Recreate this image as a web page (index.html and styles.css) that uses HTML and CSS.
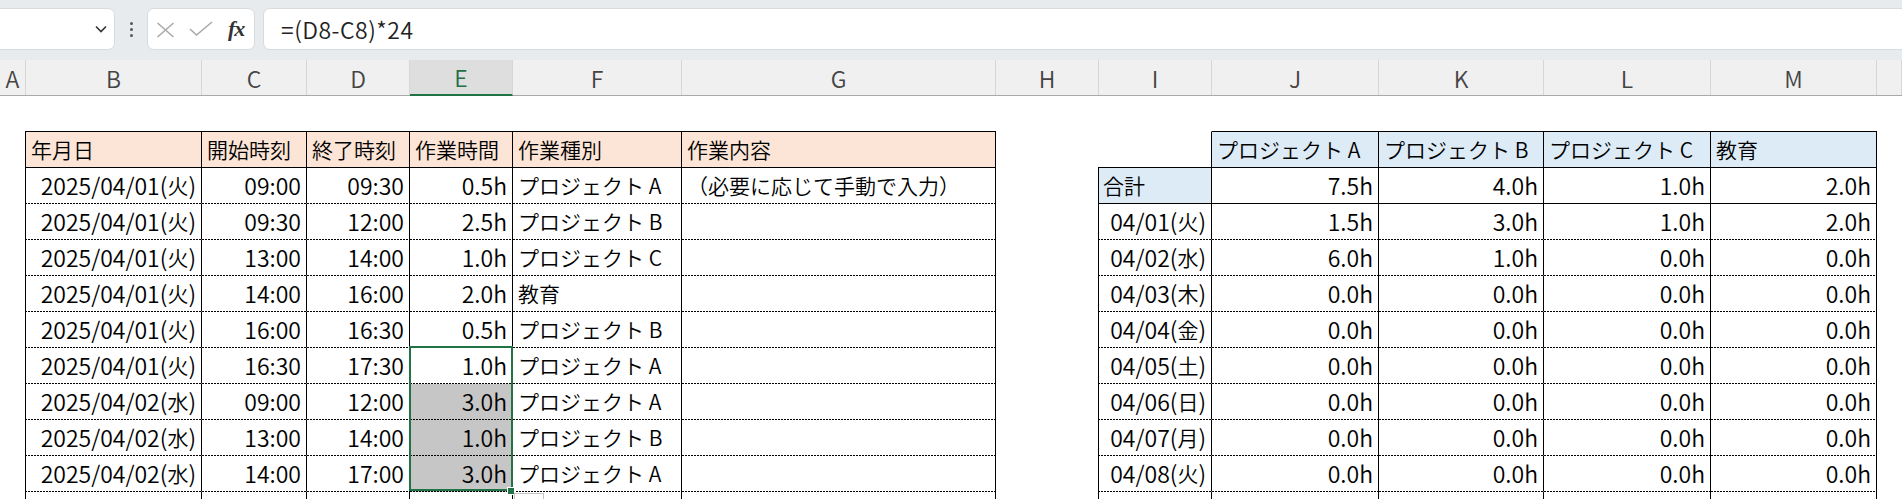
FILE: index.html
```html
<!DOCTYPE html>
<html lang="ja">
<head>
<meta charset="utf-8">
<title>作業記録</title>
<link rel="stylesheet" href="styles.css">
</head>
<body>
<div class="app">
  <div class="fbar">
    <div class="namebox">
      <svg class="chev" width="12" height="8" viewBox="0 0 12 8"><polyline points="1,1.5 6,6.5 11,1.5" fill="none" stroke="#333" stroke-width="1.6"/></svg>
    </div>
    <div class="vdots"><i></i><i></i><i></i></div>
    <div class="fxbox">
      <svg class="ico-x" width="19" height="16" viewBox="0 0 19 16"><path d="M1.5 1 L17.5 15 M17.5 1 L1.5 15" stroke="#a8a8a8" stroke-width="1.5" fill="none"/></svg>
      <svg class="ico-ok" width="24" height="15" viewBox="0 0 24 15"><polyline points="1,8 7.5,14 23,1" stroke="#a8a8a8" stroke-width="1.5" fill="none"/></svg>
      <span class="fx">fx</span>
    </div>
    <div class="formula">=(D8-C8)*24</div>
  </div>

  <div class="colhdr">
    <div class="ch">A</div>
    <div class="ch">B</div>
    <div class="ch">C</div>
    <div class="ch">D</div>
    <div class="ch on">E</div>
    <div class="ch">F</div>
    <div class="ch">G</div>
    <div class="ch">H</div>
    <div class="ch">I</div>
    <div class="ch">J</div>
    <div class="ch">K</div>
    <div class="ch">L</div>
    <div class="ch">M</div>
    <div class="ch"></div>
  </div>

  <div class="sheet">
    <div class="lt">
      <div class="c h first">年月日</div><div class="c h">開始時刻</div><div class="c h">終了時刻</div><div class="c h">作業時間</div><div class="c h">作業種別</div><div class="c h">作業内容</div>

      <div class="c first r n">2025/04/01(<span class="k">火</span>)</div><div class="c r n">09:00</div><div class="c r n">09:30</div><div class="c r n">0.5h</div><div class="c">プロジェクト A</div><div class="c">（必要に応じて手動で入力）</div>
      <div class="c first r n">2025/04/01(<span class="k">火</span>)</div><div class="c r n">09:30</div><div class="c r n">12:00</div><div class="c r n">2.5h</div><div class="c">プロジェクト B</div><div class="c"></div>
      <div class="c first r n">2025/04/01(<span class="k">火</span>)</div><div class="c r n">13:00</div><div class="c r n">14:00</div><div class="c r n">1.0h</div><div class="c">プロジェクト C</div><div class="c"></div>
      <div class="c first r n">2025/04/01(<span class="k">火</span>)</div><div class="c r n">14:00</div><div class="c r n">16:00</div><div class="c r n">2.0h</div><div class="c">教育</div><div class="c"></div>
      <div class="c first r n">2025/04/01(<span class="k">火</span>)</div><div class="c r n">16:00</div><div class="c r n">16:30</div><div class="c r n">0.5h</div><div class="c">プロジェクト B</div><div class="c"></div>
      <div class="c first r n">2025/04/01(<span class="k">火</span>)</div><div class="c r n">16:30</div><div class="c r n">17:30</div><div class="c r n">1.0h</div><div class="c">プロジェクト A</div><div class="c"></div>
      <div class="c first r n">2025/04/02(<span class="k">水</span>)</div><div class="c r n">09:00</div><div class="c r n">12:00</div><div class="c r n sel">3.0h</div><div class="c">プロジェクト A</div><div class="c"></div>
      <div class="c first r n">2025/04/02(<span class="k">水</span>)</div><div class="c r n">13:00</div><div class="c r n">14:00</div><div class="c r n sel">1.0h</div><div class="c">プロジェクト B</div><div class="c"></div>
      <div class="c first r n">2025/04/02(<span class="k">水</span>)</div><div class="c r n">14:00</div><div class="c r n">17:00</div><div class="c r n sel">3.0h</div><div class="c">プロジェクト A</div><div class="c"></div>
      <div class="c first r n"></div><div class="c r n"></div><div class="c r n"></div><div class="c r n"></div><div class="c"></div><div class="c"></div>
    </div>

    <div class="rt">
      <div class="c corner"></div><div class="c hb">プロジェクト A</div><div class="c hb">プロジェクト B</div><div class="c hb">プロジェクト C</div><div class="c hb">教育</div>

      <div class="c first tot">合計</div><div class="c r n solid">7.5h</div><div class="c r n solid">4.0h</div><div class="c r n solid">1.0h</div><div class="c r n solid">2.0h</div>
      <div class="c first r n">04/01(<span class="k">火</span>)</div><div class="c r n">1.5h</div><div class="c r n">3.0h</div><div class="c r n">1.0h</div><div class="c r n">2.0h</div>
      <div class="c first r n">04/02(<span class="k">水</span>)</div><div class="c r n">6.0h</div><div class="c r n">1.0h</div><div class="c r n">0.0h</div><div class="c r n">0.0h</div>
      <div class="c first r n">04/03(<span class="k">木</span>)</div><div class="c r n">0.0h</div><div class="c r n">0.0h</div><div class="c r n">0.0h</div><div class="c r n">0.0h</div>
      <div class="c first r n">04/04(<span class="k">金</span>)</div><div class="c r n">0.0h</div><div class="c r n">0.0h</div><div class="c r n">0.0h</div><div class="c r n">0.0h</div>
      <div class="c first r n">04/05(<span class="k">土</span>)</div><div class="c r n">0.0h</div><div class="c r n">0.0h</div><div class="c r n">0.0h</div><div class="c r n">0.0h</div>
      <div class="c first r n">04/06(<span class="k">日</span>)</div><div class="c r n">0.0h</div><div class="c r n">0.0h</div><div class="c r n">0.0h</div><div class="c r n">0.0h</div>
      <div class="c first r n">04/07(<span class="k">月</span>)</div><div class="c r n">0.0h</div><div class="c r n">0.0h</div><div class="c r n">0.0h</div><div class="c r n">0.0h</div>
      <div class="c first r n">04/08(<span class="k">火</span>)</div><div class="c r n">0.0h</div><div class="c r n">0.0h</div><div class="c r n">0.0h</div><div class="c r n">0.0h</div>
      <div class="c first r n">04/09(<span class="k">水</span>)</div><div class="c r n">0.0h</div><div class="c r n">0.0h</div><div class="c r n">0.0h</div><div class="c r n">0.0h</div>
    </div>

    <div class="selbox"></div>
    <div class="handle"></div>
    <div class="qa"></div>
  </div>
</div>
</body>
</html>
```

FILE: styles.css
```css
* { box-sizing: border-box; margin: 0; padding: 0; }

html, body {
  width: 1902px;
  height: 499px;
  overflow: hidden;
  background: #fff;
}

body {
  font-family: "Noto Sans CJK JP", "Noto Sans", sans-serif;
  font-weight: 350;
  color: #000;
}

.app {
  display: flex;
  flex-direction: column;
  height: 499px;
  overflow: hidden;
}

/* ---------- formula bar ---------- */
.fbar {
  height: 60px;
  flex: none;
  background: #e8ebee;
  display: flex;
  align-items: flex-start;
  padding-top: 8px;
}

.namebox {
  width: 126px;
  height: 42px;
  margin-left: -11px;
  background: #fff;
  border: 1px solid #d9dcdf;
  border-radius: 7px;
  display: flex;
  align-items: center;
  justify-content: flex-end;
  padding-right: 7px;
}

.vdots {
  width: 32px;
  height: 42px;
  display: flex;
  flex-direction: column;
  align-items: center;
  justify-content: center;
  gap: 3px;
}

.vdots i {
  display: block;
  width: 3px;
  height: 3px;
  border-radius: 50%;
  background: #555;
}

.fxbox {
  width: 108px;
  height: 42px;
  background: #fff;
  border: 1px solid #d9dcdf;
  border-radius: 7px;
  display: flex;
  align-items: center;
  padding-left: 8px;
}

.ico-x { margin-top: 1px; }
.ico-ok { margin-left: 14px; margin-top: -1px; }

.fx {
  margin-left: 15px;
  font-family: "Liberation Serif", serif;
  font-style: italic;
  font-weight: bold;
  font-size: 22px;
  color: #333;
  letter-spacing: -1px;
}

.formula {
  flex: 1;
  height: 42px;
  margin-left: 8px;
  margin-right: -10px;
  background: #fff;
  border: 1px solid #d9dcdf;
  border-radius: 7px;
  display: flex;
  align-items: center;
  padding-left: 17px;
  font-size: 23px;
  letter-spacing: 0.5px;
  color: #222;
}

/* ---------- column header ---------- */
.colhdr {
  flex: none;
  height: 36px;
  display: grid;
  grid-template-columns: 26px 176px 105px 103px 103px 169px 314px 103px 113px 167px 165px 167px 166px 25px;
  background: #f0f0f0;
  border-bottom: 1px solid #a9a9a9;
}

.ch {
  border-right: 1px solid #d6d6d6;
  display: flex;
  align-items: center;
  justify-content: center;
  font-size: 23px;
  color: #444;
}

.ch.on {
  background: #dedede;
  color: #1e7145;
  border-bottom: 2px solid #217346;
  margin-bottom: -1px;
}

/* ---------- sheet ---------- */
.sheet {
  position: relative;
  flex: 1;
  display: flex;
  align-items: flex-start;
  padding-top: 35px;
  padding-left: 25px;
}

.lt {
  display: grid;
  grid-template-columns: 177px 105px 103px 103px 169px 314px;
  grid-template-rows: 37px;
  grid-auto-rows: 36px;
}

.rt {
  margin-left: 102px;
  display: grid;
  grid-template-columns: 114px 167px 165px 167px 166px;
  grid-template-rows: 37px;
  grid-auto-rows: 36px;
}

.c {
  position: relative;
  border-right: 1px solid #000;
  border-bottom: 1px solid transparent;
  display: flex;
  align-items: center;
  padding: 0 5px 0 5px;
  white-space: nowrap;
  overflow: visible;
  font-size: 21px;
  line-height: 1;
}

/* Excel "dotted" hairline: 2px on, 1px off */
.c::after {
  content: "";
  position: absolute;
  left: 0;
  right: -1px;
  bottom: -1px;
  height: 1px;
  background: repeating-linear-gradient(90deg, #000 0 2px, transparent 2px 3px);
}

.c.first { border-left: 1px solid #000; }
.c.first::after { left: -1px; }

.c.r { justify-content: flex-end; padding-right: 5px; }

.c.n {
  font-size: 23px;
}

.k {
  font-size: 21px;
}

.c.h,
.c.hb {
  background: #fce4d6;
  border-top: 1px solid #000;
}
.c.hb { background: #ddebf7; }

.c.h::after,
.c.hb::after,
.c.corner::after,
.c.tot::after,
.c.solid::after {
  background: #000;
}

.c.corner {
  border-top: 1px solid transparent;
  border-left: 1px solid transparent;
}
.c.corner::after { left: -1px; }

.c.tot {
  background: #ddebf7;
  padding-left: 4px;
}

.c.sel { background: #c6c6c6; }

/* selection overlays */
.selbox {
  position: absolute;
  left: 409px;
  top: 250px;
  width: 104px;
  height: 145px;
  border: 2px solid #217346;
  z-index: 2;
}

.handle {
  position: absolute;
  left: 507px;
  top: 391px;
  width: 8px;
  height: 8px;
  background: #217346;
  border: 1px solid #fff;
  z-index: 3;
}

.qa {
  position: absolute;
  left: 514px;
  top: 397px;
  width: 30px;
  height: 20px;
  background: #fff;
  border: 1px solid #c4c4c4;
  z-index: 3;
}
```
